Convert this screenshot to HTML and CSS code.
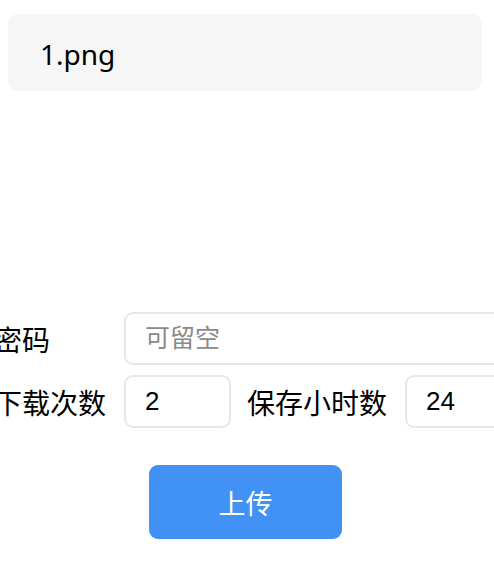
FILE: index.html
```html
<!DOCTYPE html>
<html lang="zh-CN">
  <head>
    <meta charset="UTF-8" />
    <meta name="viewport" content="width=device-width, initial-scale=1.0" />
    <title>上传文件</title>
    <link rel="stylesheet" href="styles.css">
  </head>
  <body>
    <div class="page">
      <div class="file-box">
        <span class="file-name">1.png</span>
      </div>

      <form class="upload-form" name="UploadForm" onsubmit="return false">
        <div class="row">
          <label class="label label-wide">密码</label>
          <input type="text" class="field field-long" name="Password" placeholder="可留空" />
        </div>
        <div class="row">
          <label class="label label-wide">下载次数</label>
          <input type="text" class="field field-short" name="Times" value="2" />
          <label class="label label-hours">保存小时数</label>
          <input type="text" class="field field-short" name="Hours" value="24" />
        </div>
        <div class="actions">
          <button type="submit">上传</button>
        </div>
      </form>
    </div>
  </body>
</html>
```

FILE: styles.css
```css
/* Reset & Global Styling */
* {
  box-sizing: border-box;
  margin: 0;
  padding: 0;
}

body {
  background: #fff;
  color: #000;
  overflow: hidden;
  font-family: "Noto Sans", "Noto Sans CJK SC", sans-serif;
}

.page {
  width: 494px;
  height: 574px;
  overflow: hidden;
}

/* Selected file */
.file-box {
  margin: 14px 12px 0 8px;
  height: 77px;
  padding-left: 32px;
  display: flex;
  align-items: center;
  background: #f6f6f6;
  border-radius: 10px;
}

.file-name {
  font-size: 28px;
  line-height: 1;
  margin-top: 2px;
}

/* Form */
.upload-form {
  margin-top: 221px;
  margin-left: -6px;
  display: flex;
  flex-direction: column;
  gap: 10px;
}

.row {
  display: flex;
  align-items: center;
  gap: 18px;
  white-space: nowrap;
}

.label {
  font-family: "Noto Sans CJK SC", sans-serif;
  font-size: 28px;
  line-height: 1;
  color: #000;
  flex-shrink: 0;
}

.label-wide {
  width: 112px;
}

.label-hours {
  margin-left: -2px;
}

.field {
  flex-shrink: 0;
  height: 53px;
  padding: 0 0 0 19px;
  border: 2px solid #e8e8e8;
  border-radius: 9px;
  background: #fff;
  font-family: "Liberation Sans", "Noto Sans CJK SC", sans-serif;
  font-size: 26px;
  color: #000;
  outline: none;
}

.field::placeholder {
  font-family: "Noto Sans CJK SC", sans-serif;
  font-size: 25px;
  color: #8a8a8a;
}

.field-long {
  width: 420px;
}

.field-short {
  width: 107px;
}

/* Button */
.actions {
  margin-top: 27px;
  padding-left: 155px;
}

button {
  width: 193px;
  height: 74px;
  border: none;
  border-radius: 9px;
  background: #4292f5;
  color: #fff;
  font-family: "Noto Sans CJK SC", sans-serif;
  font-size: 27px;
  cursor: pointer;
}
```
